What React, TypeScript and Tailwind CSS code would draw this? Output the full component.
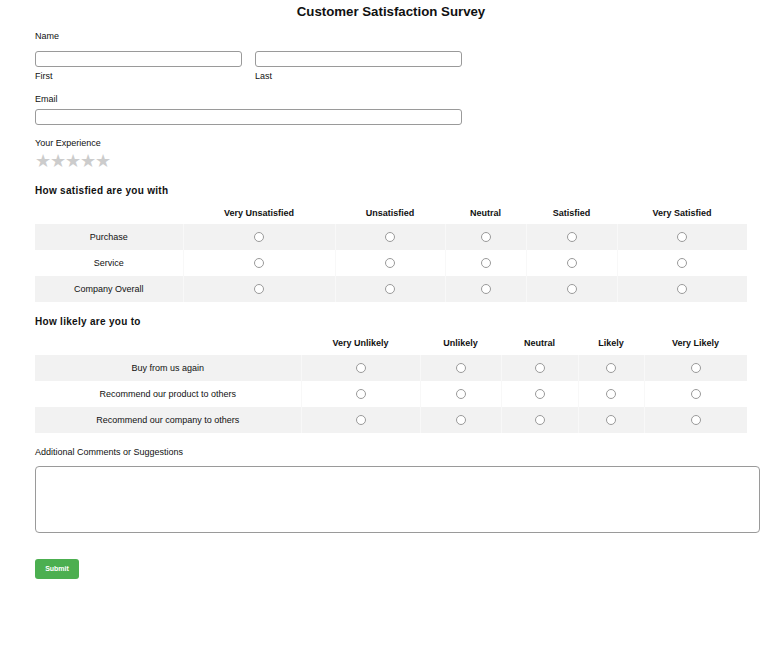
import React from 'react';

type Matrix = {
  title: string;
  widths: string[];
  columns: string[];
  rows: string[];
  name: string;
};

const satisfied: Matrix = {
  title: 'How satisfied are you with',
  widths: ['w-[148px]', 'w-[152px]', 'w-[110px]', 'w-[81px]', 'w-[91px]', 'w-[130px]'],
  columns: ['Very Unsatisfied', 'Unsatisfied', 'Neutral', 'Satisfied', 'Very Satisfied'],
  rows: ['Purchase', 'Service', 'Company Overall'],
  name: 'sat',
};

const likely: Matrix = {
  title: 'How likely are you to',
  widths: ['w-[266px]', 'w-[119px]', 'w-[81px]', 'w-[77px]', 'w-[66px]', 'w-[103px]'],
  columns: ['Very Unlikely', 'Unlikely', 'Neutral', 'Likely', 'Very Likely'],
  rows: ['Buy from us again', 'Recommend our product to others', 'Recommend our company to others'],
  name: 'like',
};

const Radio: React.FC<{ name: string }> = ({ name }) => (
  <input
    type="radio"
    name={name}
    className="block mx-auto appearance-none w-[10px] h-[10px] rounded-full border border-[#9a9a9a] bg-white m-0"
  />
);

const MatrixTable: React.FC<{ m: Matrix; headH: string; mt: string; headMt: string }> = ({ m, headH, mt, headMt }) => (
  <div className={mt}>
    <h2 className="text-[10px] leading-[12px] font-bold tracking-[0.3px]">{m.title}</h2>
    <table className={`table-fixed border-collapse w-[712px] ${headMt}`}>
      <colgroup>
        {m.widths.map((w, i) => (
          <col key={i} className={w} />
        ))}
      </colgroup>
      <thead>
        <tr className={headH}>
          <th></th>
          {m.columns.map((c) => (
            <th key={c} className="text-[9px] leading-[12px] font-bold text-center p-0 pt-[2px]">
              {c}
            </th>
          ))}
        </tr>
      </thead>
      <tbody>
        {m.rows.map((r, i) => (
          <tr key={r} className={`h-[26px] ${i % 2 === 0 ? 'bg-[#f2f2f2]' : 'bg-white'}`}>
            <td className="text-[9px] leading-[12px] text-center p-0">{r}</td>
            {m.columns.map((c) => (
              <td key={c} className="p-0 border-l border-[#f8f8f8]">
                <Radio name={`${m.name}-${i}`} />
              </td>
            ))}
          </tr>
        ))}
      </tbody>
    </table>
  </div>
);

const App: React.FC = () => {
  return (
    <div className="w-[780px] min-h-[667px] bg-white text-[#111] font-['Liberation_Sans',Arial,sans-serif]">
      <h1 className="h-[24px] leading-[24px] text-center text-[13.25px] font-bold pl-[2px]">
        Customer Satisfaction Survey
      </h1>
      <form className="pl-[35px]">
        <label className="block mt-[6px] text-[9px] leading-[12px]">Name</label>
        <div className="flex gap-[13px] mt-[9px]">
          <div className="w-[207px]">
            <input type="text" className="block w-full h-[16px] border border-[#9a9a9a] rounded-[3px]" />
            <span className="block mt-[3px] text-[9px] leading-[12px]">First</span>
          </div>
          <div className="w-[207px]">
            <input type="text" className="block w-full h-[16px] border border-[#9a9a9a] rounded-[3px]" />
            <span className="block mt-[3px] text-[9px] leading-[12px]">Last</span>
          </div>
        </div>

        <label className="block mt-[11px] text-[9px] leading-[12px]">Email</label>
        <input type="email" className="block mt-[4px] w-[427px] h-[16px] border border-[#9a9a9a] rounded-[3px]" />

        <label className="block mt-[12px] text-[9px] leading-[12px]">Your Experience</label>
        <div className="mt-[4px] h-[16px] leading-[16px] text-[17.5px] text-[#cccccc] tracking-[-1px]">
          ★★★★★
        </div>

        <MatrixTable m={satisfied} mt="mt-[16px]" headMt="mt-[3px]" headH="h-[24px]" />
        <MatrixTable m={likely} mt="mt-[14px]" headMt="mt-[1px]" headH="h-[26px]" />

        <label className="block mt-[13px] text-[9px] leading-[12px]">Additional Comments or Suggestions</label>
        <textarea className="block mt-[8px] w-[725px] h-[67px] border border-[#9a9a9a] rounded-[4px] resize-none" />

        <button
          type="submit"
          className="block mt-[26px] w-[44px] h-[20px] rounded-[3px] bg-[#4caf50] text-white text-[7px] font-bold"
        >
          Submit
        </button>
      </form>
    </div>
  );
};

export default App;
